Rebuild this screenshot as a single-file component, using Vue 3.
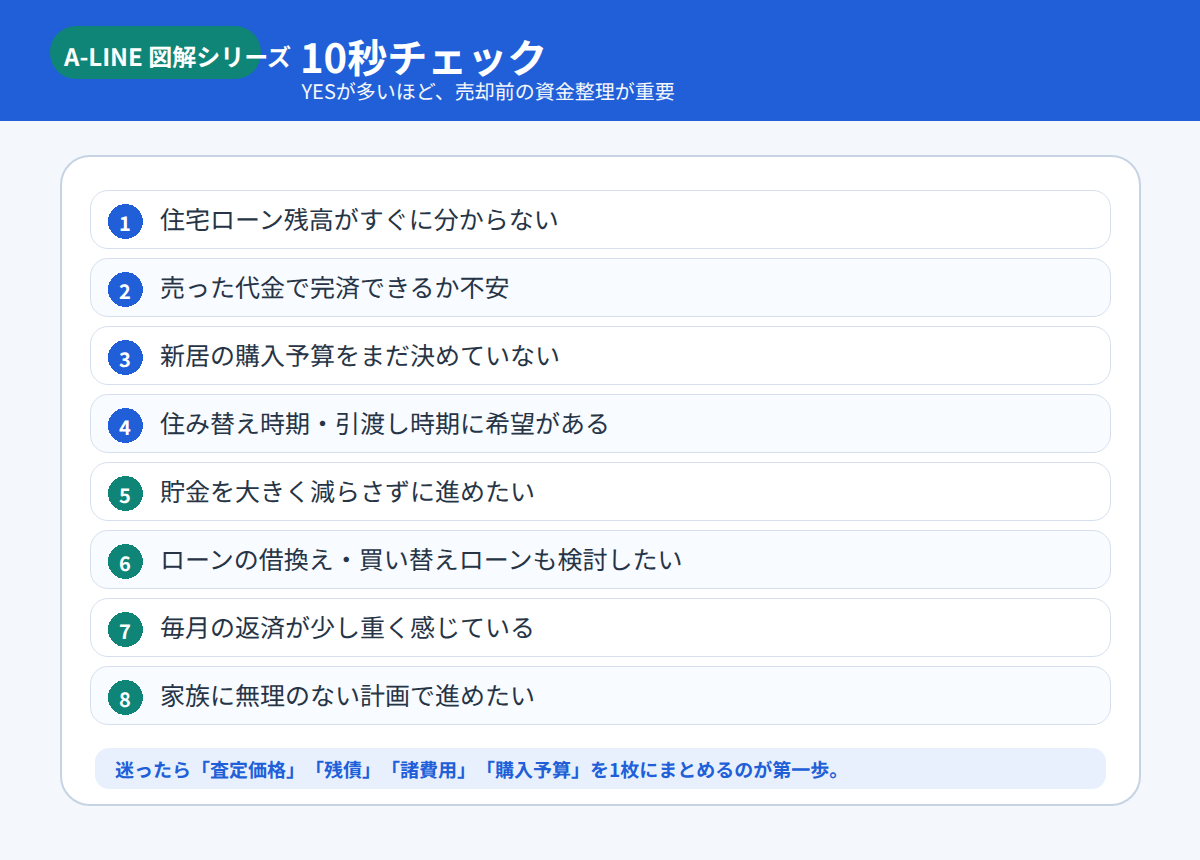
<script setup>
const items = [
  { n: 1, text: '住宅ローン残高がすぐに分からない', tone: 'blue' },
  { n: 2, text: '売った代金で完済できるか不安', tone: 'blue' },
  { n: 3, text: '新居の購入予算をまだ決めていない', tone: 'blue' },
  { n: 4, text: '住み替え時期・引渡し時期に希望がある', tone: 'blue' },
  { n: 5, text: '貯金を大きく減らさずに進めたい', tone: 'green' },
  { n: 6, text: 'ローンの借換え・買い替えローンも検討したい', tone: 'green' },
  { n: 7, text: '毎月の返済が少し重く感じている', tone: 'green' },
  { n: 8, text: '家族に無理のない計画で進めたい', tone: 'green' },
]
</script>

<template>
  <div class="page">
    <header class="head">
      <div class="pill"><span class="pill-text">A-LINE 図解シリーズ</span></div>
      <div class="titles">
        <h1 class="title">10秒チェック</h1>
        <p class="sub">YESが多いほど、売却前の資金整理が重要</p>
      </div>
    </header>
    <main class="main">
      <section class="card">
        <ul class="list">
          <li v-for="it in items" :key="it.n" class="row">
            <svg class="badge" width="35" height="35" viewBox="0 0 35 35">
              <circle cx="17.5" cy="17.5" r="17.5" :class="it.tone" shape-rendering="crispEdges" />
            </svg>
            <span class="num">{{ it.n }}</span>
            <span class="txt">{{ it.text }}</span>
          </li>
        </ul>
        <p class="note">迷ったら「査定価格」「残債」「諸費用」「購入予算」を1枚にまとめるのが第一歩。</p>
      </section>
    </main>
  </div>
</template>

<style>
html, body { margin: 0; background: #f4f7fc; }
</style>

<style scoped>
.page {
  width: 1200px;
  height: 860px;
  background: #f4f7fc;
  font-family: "Noto Sans CJK JP", "Noto Sans", sans-serif;
  text-spacing-trim: space-all;
  text-rendering: geometricPrecision;
  overflow: hidden;
}
.head {
  height: 121px;
  box-sizing: border-box;
  background: #205fd8;
  display: flex;
  align-items: flex-start;
  padding: 26px 0 0 50px;
  gap: 39px;
  color: #fff;
}
.pill {
  width: 211px;
  height: 53px;
  border-radius: 26px;
  background: #0f8577;
  flex: none;
  display: flex;
  align-items: center;
  padding-left: 14px;
  box-sizing: border-box;
}
.pill-text {
  font-size: 24px;
  font-weight: 700;
  white-space: nowrap;
  line-height: 1;
  margin-top: 7px;
}
.titles { display: flex; flex-direction: column; }
.title {
  margin: 4px 0 0;
  font-size: 40px;
  font-weight: 700;
  line-height: 52px;
}
.sub {
  margin: -6px 0 0 1.5px;
  font-size: 20px;
  font-weight: 400;
  line-height: 30px;
  color: #f4f7fc;
}
.main { padding: 34px 59px 0 60px; }
.card {
  box-sizing: border-box;
  height: 651px;
  background: #fff;
  border: 2px solid #c6d3e3;
  border-radius: 30px;
  padding: 33px 28px 0;
}
.list { list-style: none; margin: 0; padding: 0; display: flex; flex-direction: column; gap: 9px; }
.row {
  position: relative;
  box-sizing: border-box;
  height: 59px;
  border: 1px solid #d6e0ec;
  border-radius: 18px;
  background: #fff;
  display: flex;
  align-items: center;
  padding-left: 17px;
}
.row:nth-child(even) { background: #f8fbff; }
.badge { flex: none; display: block; margin-top: 4px; }
.badge .blue { fill: #205fd8; }
.badge .green { fill: #0f8577; }
.num {
  position: absolute;
  left: 16.5px;
  top: 0;
  width: 35px;
  height: 57px;
  line-height: 63px;
  text-align: center;
  color: #fff;
  font-size: 20px;
  font-weight: 700;
}
.txt {
  margin-left: 17px;
  font-size: 25px;
  line-height: 53px;
  color: #263445;
  white-space: nowrap;
}
.note {
  margin: 23px 5px 0;
  height: 41px;
  box-sizing: border-box;
  border-radius: 14px;
  background: #e8f0fe;
  color: #205fd8;
  font-size: 19px;
  font-weight: 700;
  line-height: 44px;
  padding-left: 20px;
  white-space: nowrap;
}
</style>
